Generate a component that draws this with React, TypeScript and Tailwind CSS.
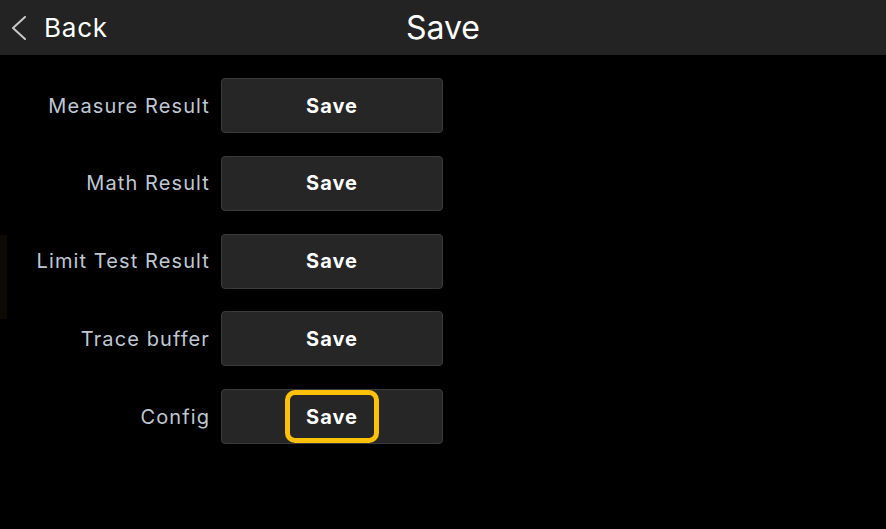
const rows = ['Measure Result', 'Math Result', 'Limit Test Result', 'Trace buffer', 'Config'];

export default function App() {
  return (
    <main
      className="w-[886px] h-[529px] bg-black overflow-hidden relative"
      style={{ fontFamily: 'Inter, "Noto Sans", sans-serif' }}
    >
      {/* Header */}
      <header className="h-[55px] bg-[#232323] flex items-center relative">
        <div className="flex items-center pl-[11px] text-white">
          <svg width="16" height="24" viewBox="0 0 16 24" fill="none">
            <polyline points="14,1 2,12 14,23" stroke="#c8c8c8" strokeWidth="2" strokeLinecap="round" strokeLinejoin="round" />
          </svg>
          <span className="ml-[17px] text-[26px] leading-none tracking-[0.8px]">Back</span>
        </div>
        <h1 className="absolute left-0 right-0 text-center text-white text-[32px] leading-none pointer-events-none">
          Save
        </h1>
      </header>

      {/* faint edge panel */}
      <div className="absolute left-0 top-[235px] w-[7px] h-[84px] bg-[#0d0a06]" />

      <div className="pt-[23px] flex flex-col gap-[22.8px]">
        {rows.map((label, i) => (
          <div key={label} className="flex items-center gap-[11px]">
            <span className="w-[210px] text-right text-[20px] tracking-[1.1px] text-[#bfc8d2] whitespace-nowrap">{label}</span>
            <button className="w-[222px] h-[55px] bg-[#262626] border border-[#3a3a3a] rounded-[4px] flex items-center justify-center">
              {i === rows.length - 1 ? (
                <span className="w-[94px] h-[53px] border-[5px] border-[#ffc107] rounded-[10px] flex items-center justify-center text-white text-[20px] font-bold tracking-[1px]">
                  Save
                </span>
              ) : (
                <span className="text-white text-[20px] font-bold tracking-[1px]">Save</span>
              )}
            </button>
          </div>
        ))}
      </div>
    </main>
  );
}
